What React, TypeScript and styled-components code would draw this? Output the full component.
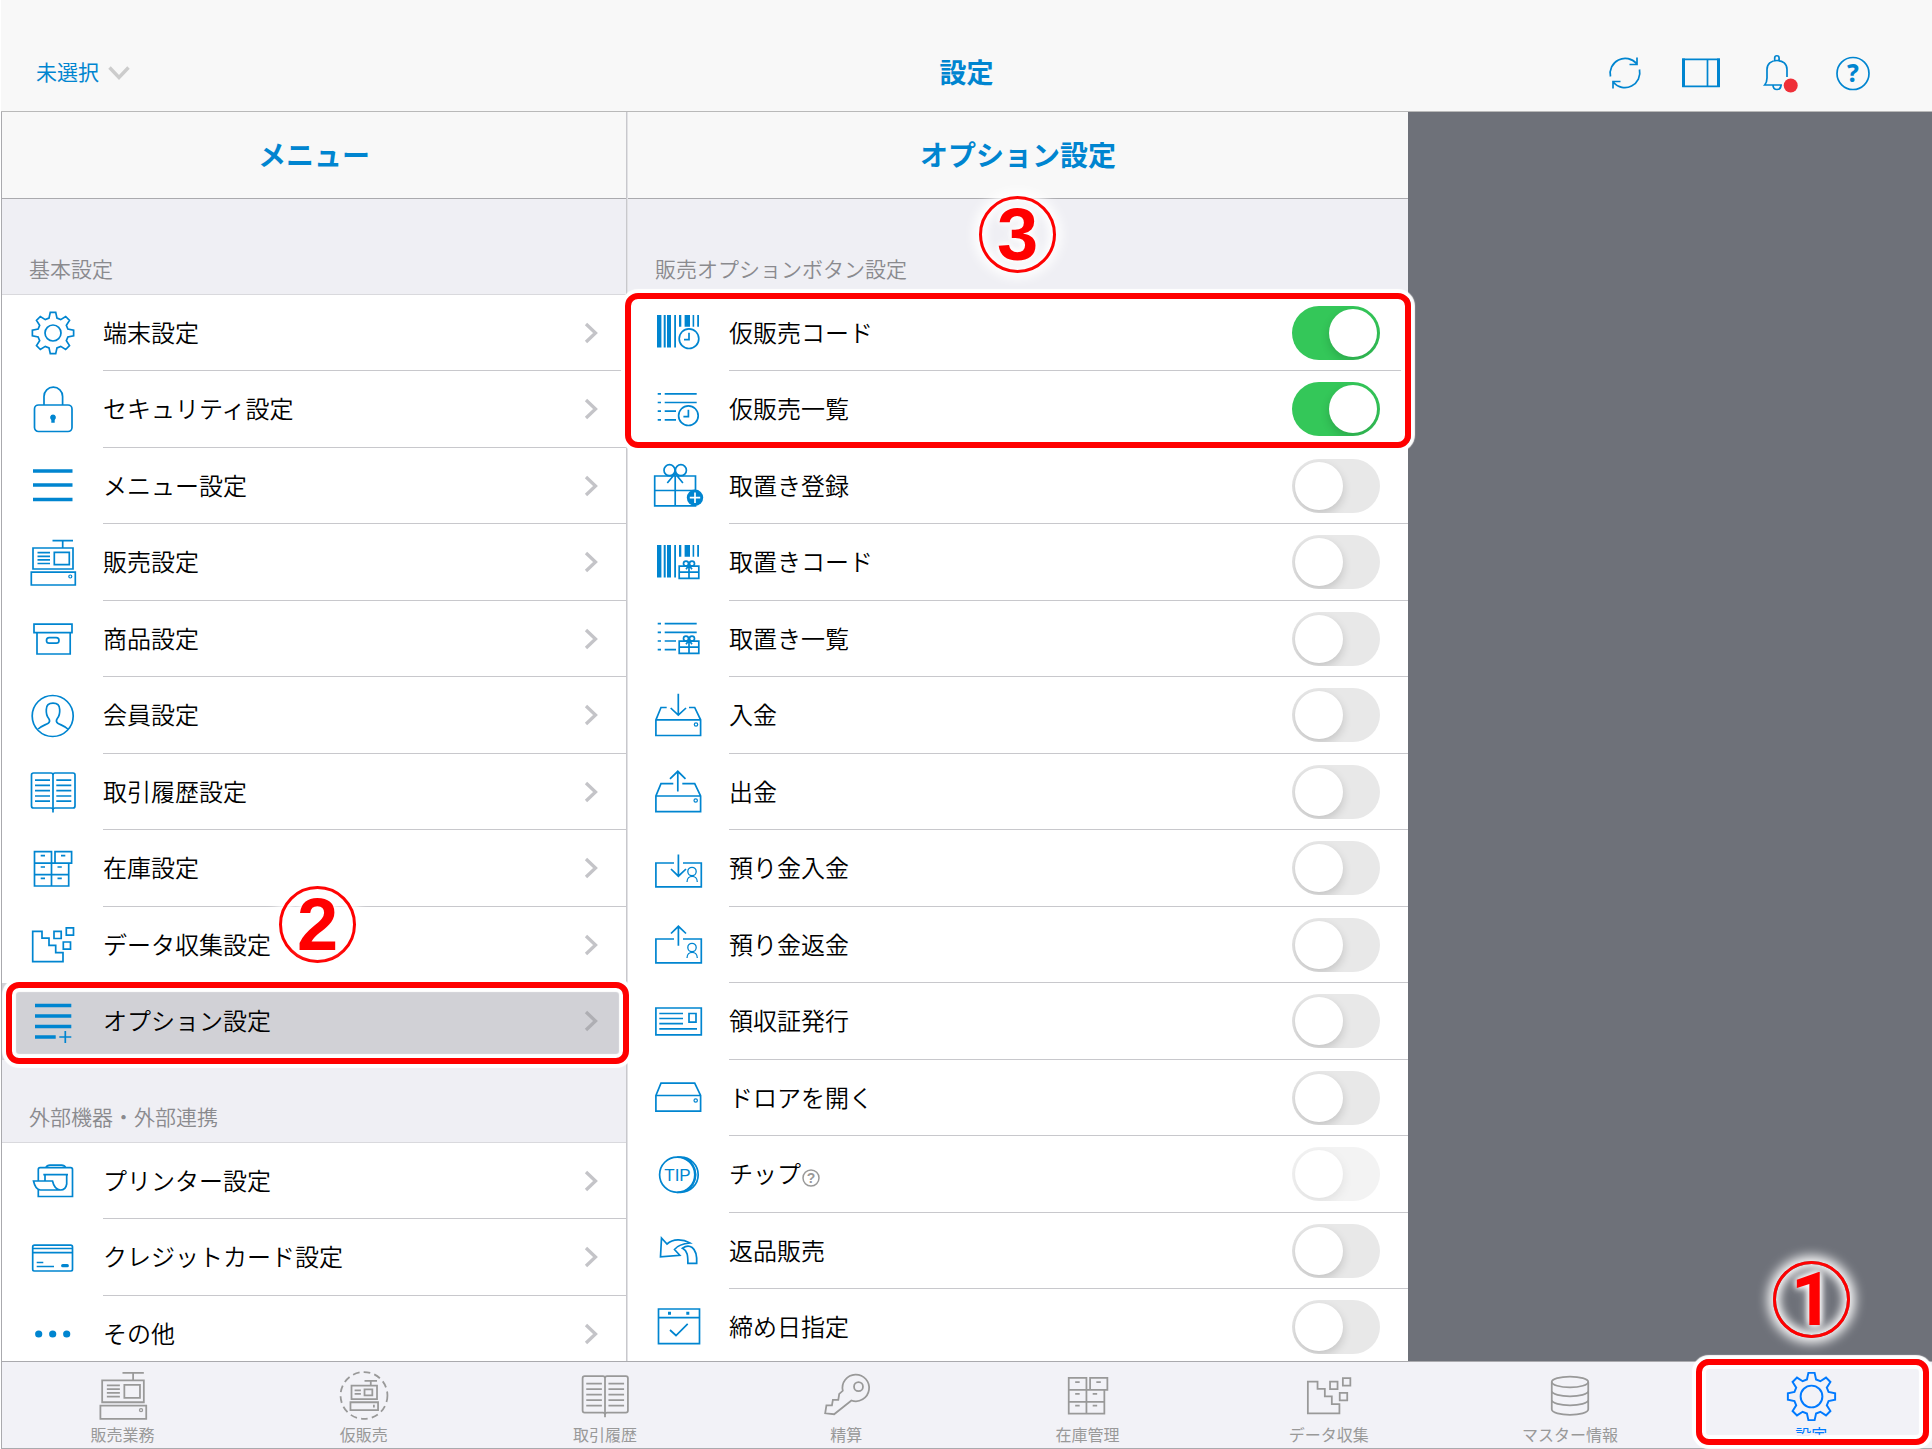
import React, { useState } from "react";
import styled, { createGlobalStyle, css } from "styled-components";

const color = {
  blue: "#0085d0",
  active: "#007aff",
  bar: "#f8f8f8",
  group: "#efeff4",
  tabs: "#f2f2f7",
  selected: "#d1d1d6",
  line: "#c8c8cc",
  strong: "#aaaaae",
  muted: "#8a8a8e",
  tab: "#999999",
  text: "#000000",
  empty: "#6e7179",
  mark: "#ff0000",
};

const GlobalStyle = createGlobalStyle`
  * { box-sizing: border-box; }
  body {
    margin: 0;
    background: #ffffff;
    font-family: "Noto Sans CJK JP", sans-serif;
    color: ${color.text};
  }
  button { font-family: inherit; border: 0; background: none; padding: 0; margin: 0; cursor: pointer; }
  ul { list-style: none; margin: 0; padding: 0; }
  h1, h2, h3 { margin: 0; }
`;

/* ---------- icons ---------- */

const gearPath = (() => {
  const at = (r: number, deg: number) => {
    const a = ((deg - 90) * Math.PI) / 180;
    return `${(24 + r * Math.cos(a)).toFixed(2)} ${(24 + r * Math.sin(a)).toFixed(2)}`;
  };
  const parts: string[] = [];
  for (let i = 0; i < 8; i++) {
    const c = i * 45;
    parts.push(`${at(15.4, c - 15)} L${at(20.8, c - 7.5)} L${at(20.8, c + 7.5)} L${at(15.4, c + 15)}`);
  }
  return `M${parts.join(" L")}Z`;
})();

const Clock = ({ cx, cy }: { cx: number; cy: number }) => (
  <>
    <circle cx={cx} cy={cy} r="9.8" />
    <path d={`M${cx} ${cy - 6}V${cy + 1}H${cx - 5}`} />
  </>
);

const Bars = () => (
  <path
    fill="currentColor"
    stroke="none"
    d="M2 6h4.4v32.4H2zM8.7 6h2v32.4h-2zM12 6h4v32.4h-4zM19.2 6H21v32.4h-1.8zM24 6h2.3v11.7H24zM29.6 6H35v11.7h-5.4zM37.6 6h1.6v11.7h-1.6zM42.2 6h1.8v11.7h-1.8z"
  />
);

const ListLines = ({ y }: { y: number }) => (
  <path
    d={`M2.7 ${y}h3.3M9.7 ${y}h32M2.7 ${y + 8.7}h3.3M9.7 ${y + 8.7}h32M2.7 ${y + 17.4}h3.3M9.7 ${y + 17.4}H21M2.7 ${y + 26}h3.3M9.7 ${y + 26}H21`}
  />
);

const SmallGift = ({ y }: { y: number }) => (
  <>
    <path d={`M24.2 ${y}h19.6v12.2H24.2zM24.2 ${y + 6}h19.6M34 ${y - 2}v14.2M34 ${y - 1}l-3 4M34 ${y - 1}l3 4`} />
    <circle cx="31" cy={y - 2.6} r="2.5" />
    <circle cx="37" cy={y - 2.6} r="2.5" />
  </>
);

const Person = () => (
  <g strokeWidth="1.3">
    <circle cx="37" cy="26.5" r="4.2" />
    <path d="M32 37c0-7.500 10.300-7.500 10.300 0" />
  </g>
);

const shapes: Record<string, React.ReactNode> = {
  gear: (
    <>
      <path d={gearPath} />
      <circle cx="24" cy="24" r="8" />
    </>
  ),
  tabGear: (
    <>
      <path d={gearPath} />
      <circle cx="24" cy="24" r="9.500" />
    </>
  ),
  lock: (
    <>
      <rect x="5.500" y="19" width="37.500" height="26.500" rx="4" />
      <path d="M15 19v-8.500a9.300 9.300 0 0 1 18.600 0V19" />
      <path fill="currentColor" stroke="none" d="M24 28.500a3 3 0 0 1 1.700 5.400V36.700h-3.400v-2.800A3 3 0 0 1 24 28.500z" />
    </>
  ),
  menu: <path strokeWidth="3.3" d="M4 9h39.500M4 23h39.500M4 37.500h39.500" />,
  register: (
    <>
      <path d="M23.500 1.700H44M33.700 1.700v7M4 9h40v21H4zM8.500 13.700H21M8.500 17.300H21M8.500 20.900H21M8.500 24.500H21M25.300 13.300h15v12.400h-15zM2.300 33.200h44V46h-44z" />
      <circle cx="41.300" cy="37.500" r="1.500" strokeWidth="1.200" />
    </>
  ),
  box: (
    <>
      <path d="M5 9.200h38v8.500H5zM8 17.700h33.200V39H8z" />
      <rect x="17.500" y="22.700" width="12.500" height="5.400" rx="2.700" />
    </>
  ),
  member: (
    <>
      <circle cx="23.700" cy="24" r="20.500" />
      <path d="M9.200 37c3-3 7-4 10-5.800 1.700-1.200 1.500-3.200.5-4.700-1.700-2-2.700-4-2.400-9C17.400 13 20 11.200 24 11.200s6.600 1.800 6.700 6.300c.3 5-.7 7-2.400 9-1 1.500-1.200 3.500.5 4.700 3 1.800 7 2.800 10 5.800" />
    </>
  ),
  book: (
    <path d="M24 7q0-2-2-2H4.500q-2 0-2 2v31q0 2 2 2H22q2 0 2 2 0-2 2-2h18q2 0 2-2V7q0-2-2-2H26q-2 0-2 2v37.500M6 12.200h15M6 17.400h15M6 22.700h15M6 28h15M6 33.200h15M27.300 12.200h15M27.300 17.400h15M27.300 22.700h15M27.300 28h15M27.300 33.200h15" />
  ),
  cabinet: (
    <path d="M5.500 6.700h17v11.500h-17zM26 6.700h16.600v11.500H26zM5.500 18.200h34.200V41H5.500zM5.500 29.600h34.200M22.500 18.200V41M11.700 10.700h4.300M32 10.700h4.300M11.700 22h4.300M28.500 22h4.300M11.700 33.300h4.300M28.500 33.300h4.300" />
  ),
  stairs: (
    <path d="M3.700 10.300H13v6.900h7v7.200h6.700v7.300H34v9H3.700zM25 10.300h7.200v7.200H25zM37.300 6.900h7.200v7.200h-7.200zM34.300 21h7.200v7.200h-7.200z" />
  ),
  options: (
    <>
      <path strokeWidth="3.500" d="M6 7.500h36.300M6 18h36.300M6 28.500h36.300M6 39h20.700" />
      <path d="M30.300 39h12M36.300 33v12" />
    </>
  ),
  printer: (
    <path d="M9.300 24V12.500q0-1.800 1.800-1.800h30.600q1.800 0 1.800 1.800v27H9.300V33M16.700 10.700q1.300-2.500 4.300-2.500h11.500q3 0 4.300 2.500M14.300 17.700H39M16 17.700V24M37.700 17.700V27q-1 6-6 6H11.500q-5 0-7-9H23.500q2 9 8.200 9" />
  ),
  card: (
    <>
      <rect x="3.700" y="11.200" width="39.800" height="25.800" rx="1.800" />
      <path d="M3.700 14.500h39.800M3.700 18.600h39.800M7.700 28.500h6.600M7.700 32.500H25" />
      <path strokeWidth="3.200" strokeLinecap="round" d="M33.700 31.700h4.600" />
    </>
  ),
  more: (
    <g fill="currentColor" stroke="none">
      <circle cx="9.700" cy="24" r="3.600" />
      <circle cx="23.700" cy="24" r="3.600" />
      <circle cx="37.700" cy="24" r="3.600" />
    </g>
  ),
  codeClock: (
    <>
      <Bars />
      <Clock cx={34} cy={29.700} />
    </>
  ),
  listClock: (
    <>
      <ListLines y={7.800} />
      <Clock cx={33.400} cy={29.700} />
    </>
  ),
  giftAdd: (
    <>
      <path d="M-.3 14H40.500v29.800H-.3zM-.3 28.500H40.500M20.200 14v29.800M20.200 11.500L12.300 21M20.200 11.500L27.900 21" />
      <circle cx="14.500" cy="8.200" r="5.500" />
      <circle cx="25.900" cy="8.200" r="5.500" />
      <circle cx="40" cy="35.700" r="8.200" fill="currentColor" stroke="none" />
      <path stroke="#ffffff" d="M34.800 35.700h10.400M40 30.500v10.400" />
    </>
  ),
  codeGift: (
    <>
      <Bars />
      <SmallGift y={27.200} />
    </>
  ),
  listGift: (
    <>
      <ListLines y={8.600} />
      <SmallGift y={26.200} />
    </>
  ),
  deposit: (
    <>
      <path d="M23.300 1.800V23M15.700 16l7.600 7.200L31 16M11.700 15.500H6L.9 27.800v15.700h44.700V27.800L39.700 15.500H34M.9 27.800h44.700" />
      <circle cx="41" cy="32.500" r="1.700" strokeWidth="1.200" />
    </>
  ),
  withdraw: (
    <>
      <path d="M22.800 23.500V3.300M15 10.900l7.800-7.600 7.700 7.600M18.300 15.700H6L.9 28v15.700h44.700V28L39.700 15.700H27.300M.9 28h44.700" />
      <circle cx="40.700" cy="32.500" r="1.700" strokeWidth="1.200" />
    </>
  ),
  keepIn: (
    <>
      <path d="M19 18H.9v23.800h45.400V18H28M23.400 9.500V31M16 24l7.400 7.200L31 24" />
      <Person />
    </>
  ),
  keepOut: (
    <>
      <path d="M19 18H.9v23.800h45.400V18H28M23.400 24.700V5.300M16 12.500l7.400-7.200 7.600 7.200" />
      <Person />
    </>
  ),
  receipt: (
    <path d="M.9 10h45.400v26.800H.9zM4.300 15.500H28M4.300 20.500H28M4.300 25.600H28M4.300 30.800H42M34 15.500h7v8.700h-7z" />
  ),
  drawer: (
    <>
      <path d="M.9 21.500L6 9.200h33.700l5.900 12.300v15.700H.9zM.9 21.500h44.700" />
      <circle cx="40.700" cy="26.500" r="1.700" strokeWidth="1.200" />
    </>
  ),
  tip: (
    <>
      <circle cx="22.200" cy="23.700" r="17.600" />
      <path d="M22.200 6.100h3.400a17.600 17.600 0 0 1 0 35.200h-3.400M30 7.500a17.600 17.600 0 0 1 0 32.400" />
      <text x="22.500" y="30" textAnchor="middle" fontFamily="Liberation Sans, sans-serif" fontSize="17" fontWeight="400" fill="currentColor" stroke="none">
        TIP
      </text>
    </>
  ),
  back: (
    <path d="M6.500 11l5.500 6c6-5.300 15.500-5.300 23-1-7 .5-12.500 2.500-15.500 6.500l5.300 5.800-19.300 1.500zM27.500 21.300c6-4.500 15-2.500 14.200 15h-8.800c0-8-.5-12.500-5.400-15z" />
  ),
  calendar: (
    <>
      <path d="M3.500 5h41v34.700h-41zM3.500 13.700h41M15 26l6 5.500 11.700-11.700" />
      <path fill="currentColor" stroke="none" d="M13 7.800h3v3h-3zM31.300 7.800h3v3h-3z" />
    </>
  ),
  provisional: (
    <>
      <circle cx="24" cy="23.500" r="22.500" strokeDasharray="6.500 4" />
      <path d="M24.500 9.500h12M30.500 9.500v4.500M12 14h24.500v13H12zM15 18.700h6M15 22h6M24.500 17.700h7.500v5.600h-7.500zM11 30h26.500v7.500H11zM33.500 32.500v2.500" />
    </>
  ),
  key: (
    <>
      <path d="M20.900 19a12.800 12.800 0 1 1 8.300 9.300L12.600 41.500 4 40.600l1.200-7.600h5.300l.9-5.300h5.200l.9-5.700z" />
      <circle cx="36" cy="15" r="4.300" />
    </>
  ),
  database: (
    <>
      <ellipse cx="24" cy="10.500" rx="17.500" ry="5.200" />
      <path d="M6.500 10.500v26.300c0 7 35 7 35 0V10.500M6.500 19c0 7 35 7 35 0M6.500 27.700c0 7 35 7 35 0" />
    </>
  ),
};

const Svg = styled.svg<{ $size: number }>`
  display: block;
  flex: none;
  width: ${(p) => p.$size}px;
  height: ${(p) => p.$size}px;
  overflow: visible;
  fill: none;
  stroke: currentColor;
`;

const Icon = ({ name, size = 48 }: { name: string; size?: number }) => (
  <Svg $size={size} viewBox="0 0 48 48" strokeWidth="1.700" aria-hidden="true">
    {shapes[name]}
  </Svg>
);

/* ---------- page frame ---------- */

const Page = styled.div`
  display: flex;
  flex-direction: column;
  height: 100vh;
  padding-left: 1px;
  overflow: hidden;
`;

const Header = styled.header`
  display: grid;
  grid-template-columns: 1fr auto 1fr;
  align-items: center;
  flex: none;
  height: 112px;
  padding: 34px 35px 0;
  background: ${color.bar};
  border-bottom: 1px solid #b9b9b9;
  color: ${color.blue};
`;

const titleText = css`
  line-height: 36px;
  padding-bottom: 2px;
  font-weight: 700;
  color: ${color.blue};
`;

const Title = styled.h1`
  ${titleText}
  font-size: 27px;
`;

const Picker = styled.button`
  display: flex;
  align-items: center;
  justify-self: start;
  gap: 9px;
  font-size: 21px;
  line-height: 32px;
  color: ${color.blue};
`;

const PickerText = styled.span`
  padding-bottom: 3px;
`;

const Tools = styled.div`
  display: flex;
  justify-content: flex-end;
  gap: 36px;
  padding-right: 24px;
`;

const Tool = styled.button`
  color: ${color.blue};
`;

const Columns = styled.main`
  position: relative;
  display: grid;
  grid-template-columns: 625fr 781fr 524fr;
  flex: 1;
  min-height: 0;
  overflow: hidden;
  border-left: 1px solid ${color.strong};
`;

const Column = styled.section`
  min-width: 0;
  background: #ffffff;
`;

const MenuColumn = styled(Column)`
  border-right: 1px solid ${color.line};
`;

const OptionColumn = styled(Column)`
  border-left: 1px solid #e2e2e5;
`;

const EmptyColumn = styled.div`
  background: ${color.empty};
`;

const ColumnTitle = styled.h2`
  ${titleText}
  display: flex;
  align-items: center;
  justify-content: center;
  height: 87px;
  background: ${color.bar};
  border-bottom: 1px solid ${color.strong};
  font-size: 28px;
`;

const GroupTitle = styled.h3<{ $first?: boolean }>`
  display: flex;
  align-items: flex-end;
  height: ${(p) => (p.$first ? 96 : 83)}px;
  padding: 0 27px 10px;
  background: ${color.group};
  border-bottom: 1px solid #d9d9dd;
  font-size: 21px;
  line-height: 32px;
  font-weight: 350;
  color: ${color.muted};
`;

/* ---------- rows ---------- */

const Item = styled.li<{ $selected?: boolean }>`
  position: relative;
  height: 76px;
  background: ${(p) => (p.$selected ? color.selected : "transparent")};
  &:nth-child(even) {
    height: 77px;
  }
`;

const rowLayout = css`
  display: flex;
  align-items: center;
  width: 100%;
  height: 100%;
  padding-left: 27px;
  gap: 26px;
  color: ${color.blue};
`;

const MenuButton = styled.button`
  ${rowLayout}
  text-align: left;
`;

const OptionRow = styled.div`
  ${rowLayout}
`;

const RowBody = styled.span<{ $plain?: boolean }>`
  display: flex;
  align-items: center;
  justify-content: space-between;
  flex: 1;
  height: 100%;
  padding-right: 28px;
  border-bottom: 1px solid ${(p) => (p.$plain ? "transparent" : color.line)};
  font-size: 24px;
  line-height: 36px;
  font-weight: 350;
  color: ${color.text};
`;

const LabelGroup = styled.span`
  display: flex;
  align-items: center;
  gap: 1px;
  padding-bottom: 2px;
`;

const HelpButton = styled.button`
  margin-top: 10px;
  color: ${color.tab};
`;

const Switch = styled.input`
  position: relative;
  appearance: none;
  flex: none;
  width: 88px;
  height: 54px;
  margin: 0;
  border-radius: 27px;
  background: #e8e8e8;
  overflow: hidden;
  cursor: pointer;
  &::before {
    content: "";
    position: absolute;
    top: 3px;
    left: 3px;
    width: 48px;
    height: 48px;
    border-radius: 50%;
    background: #ffffff;
    box-shadow: 0 4px 10px rgba(0, 0, 0, 0.16);
  }
  &:checked {
    background: #34c759;
  }
  &:checked::before {
    left: 37px;
  }
  &:disabled {
    opacity: 0.5;
  }
`;

/* ---------- tab bar ---------- */

const TabBar = styled.nav`
  position: relative;
  display: grid;
  grid-template-columns: repeat(8, 1fr);
  flex: none;
  background: ${color.tabs};
  border: 1px solid ${color.strong};
  border-right: 0;
`;

const TabCell = styled.div`
  position: relative;
`;

const Tab = styled.button<{ $active?: boolean }>`
  display: flex;
  flex-direction: column;
  align-items: center;
  width: 100%;
  padding: 8px 0 2px;
  font-size: 16px;
  line-height: 24px;
  color: ${(p) => (p.$active ? color.active : color.tab)};
`;

const TabIcon = styled.span`
  display: flex;
  align-items: center;
  justify-content: center;
  height: 52px;
`;

/* ---------- annotations ---------- */

const Frame = styled.span<{ $inset: string }>`
  position: absolute;
  inset: ${(p) => p.$inset};
  z-index: 2;
  border: 6px solid ${color.mark};
  border-radius: 13px;
  box-shadow: 0 0 1px 4px #ffffff, inset 0 0 1px 4px #ffffff;
  pointer-events: none;
`;

const Step = styled.span<{ $left: string; $top: number; $face?: string }>`
  position: absolute;
  left: ${(p) => p.$left};
  top: ${(p) => p.$top}px;
  z-index: 3;
  width: 77px;
  height: 77px;
  border: 3px solid ${color.mark};
  border-radius: 50%;
  box-shadow: 0 0 12px 5px #ffffff, inset 0 0 10px 4px #ffffff;
  text-shadow: 0 0 6px #ffffff, 0 0 6px #ffffff, 0 0 12px #ffffff;
  font-family: ${(p) => p.$face ?? '"Liberation Sans"'}, sans-serif;
  font-size: 74px;
  line-height: 72px;
  font-weight: 700;
  text-align: center;
  color: ${color.mark};
  pointer-events: none;
`;

/* ---------- data ---------- */

const basic = [
  ["gear", "端末設定"],
  ["lock", "セキュリティ設定"],
  ["menu", "メニュー設定"],
  ["register", "販売設定"],
  ["box", "商品設定"],
  ["member", "会員設定"],
  ["book", "取引履歴設定"],
  ["cabinet", "在庫設定"],
  ["stairs", "データ収集設定"],
  ["options", "オプション設定"],
];

const external = [
  ["printer", "プリンター設定"],
  ["card", "クレジットカード設定"],
  ["more", "その他"],
];

const options = [
  ["codeClock", "仮販売コード"],
  ["listClock", "仮販売一覧"],
  ["giftAdd", "取置き登録"],
  ["codeGift", "取置きコード"],
  ["listGift", "取置き一覧"],
  ["deposit", "入金"],
  ["withdraw", "出金"],
  ["keepIn", "預り金入金"],
  ["keepOut", "預り金返金"],
  ["receipt", "領収証発行"],
  ["drawer", "ドロアを開く"],
  ["tip", "チップ"],
  ["back", "返品販売"],
  ["calendar", "締め日指定"],
];

const tabs = [
  ["register", "販売業務"],
  ["provisional", "仮販売"],
  ["book", "取引履歴"],
  ["key", "精算"],
  ["cabinet", "在庫管理"],
  ["stairs", "データ収集"],
  ["database", "マスター情報"],
  ["tabGear", "設定"],
];

const Chevron = ({ stroke }: { stroke: string }) => (
  <svg width="14" height="22" viewBox="0 0 14 22" fill="none" stroke={stroke} strokeWidth="3.300" aria-hidden="true">
    <path d="M2 2l9.500 9L2 20" />
  </svg>
);

const MenuRow = ({ icon, label, selected, last }: { icon: string; label: string; selected?: boolean; last?: boolean }) => (
  <Item $selected={selected}>
    <MenuButton type="button" aria-current={selected ? "page" : undefined}>
      <Icon name={icon} />
      <RowBody $plain={last}>
        <LabelGroup>{label}</LabelGroup>
        <Chevron stroke={selected ? "#aeaeb3" : "#c4c4c8"} />
      </RowBody>
    </MenuButton>
    {selected && (
      <>
        <Frame $inset="-1px -3px -4px 4px" />
        <Step $left="277px" $top={-97}>2</Step>
      </>
    )}
  </Item>
);

export default function App() {
  const [on, setOn] = useState<Record<string, boolean>>({ codeClock: true, listClock: true });

  return (
    <>
      <GlobalStyle />
      <Page>
        <Header>
          <Picker type="button">
            <PickerText>未選択</PickerText>
            <svg width="22" height="14" viewBox="0 0 22 14" fill="none" stroke="#cccccc" strokeWidth="3.400" aria-hidden="true">
              <path d="M1.500 1.500L11 11.500l9.500-10" />
            </svg>
          </Picker>
          <Title>設定</Title>
          <Tools>
            <Tool type="button" aria-label="更新">
              <Svg $size={40} viewBox="0 0 40 40" strokeWidth="1.700">
                <path d="M5.500 23.500A15 15 0 0 1 31.500 10.500M34.500 16.500A15 15 0 0 1 8.500 29.500M32 4.500v7h-7.500M8 35.500v-7h7.500" />
              </Svg>
            </Tool>
            <Tool type="button" aria-label="画面分割">
              <Svg $size={40} viewBox="0 0 40 40" strokeWidth="1.700">
                <path d="M2 6.300h36v27H2zM26.500 6.300v27" />
                <path strokeWidth="3" d="M2.500 5.500v28.600M37.500 5.500v28.600" />
              </Svg>
            </Tool>
            <Tool type="button" aria-label="通知">
              <Svg $size={40} viewBox="0 0 40 40" strokeWidth="1.700">
                <path d="M30 24V16.500C30 11 26 7.500 20 7.500S10 11 10 16.500V25c0 3-.7 5-2.300 7H25M17.700 7.500V5c0-3 4.400-3 4.400 0v2.500M16 32c0 6 8 6 8 0" />
                <circle cx="33.700" cy="32.500" r="7" fill="#ef2f38" stroke="none" />
              </Svg>
            </Tool>
            <Tool type="button" aria-label="ヘルプ">
              <Svg $size={40} viewBox="0 0 40 40" strokeWidth="1.700">
                <circle cx="20" cy="20.500" r="16" />
                <text x="20" y="29" textAnchor="middle" fontFamily="Noto Sans, sans-serif" fontWeight="800" fontSize="24" fill="currentColor" stroke="none">
                  ?
                </text>
              </Svg>
            </Tool>
          </Tools>
        </Header>

        <Columns>
          <MenuColumn>
            <ColumnTitle>メニュー</ColumnTitle>
            <GroupTitle $first>基本設定</GroupTitle>
            <ul>
              {basic.map(([icon, label]) => (
                <MenuRow key={icon} icon={icon} label={label} selected={icon === "options"} last={icon === "options"} />
              ))}
            </ul>
            <GroupTitle>外部機器・外部連携</GroupTitle>
            <ul>
              {external.map(([icon, label]) => (
                <MenuRow key={icon} icon={icon} label={label} last={icon === "more"} />
              ))}
            </ul>
          </MenuColumn>

          <OptionColumn>
            <ColumnTitle>オプション設定</ColumnTitle>
            <GroupTitle $first>販売オプションボタン設定</GroupTitle>
            <ul>
              {options.map(([icon, label], i) => (
                <Item key={icon}>
                  <OptionRow>
                    <Icon name={icon} />
                    <RowBody>
                      <LabelGroup>
                        <label htmlFor={`option-${icon}`}>{label}</label>
                        {icon === "tip" && (
                          <HelpButton type="button" aria-label="チップの説明">
                            <Svg $size={18} viewBox="0 0 18 18" strokeWidth="1.500">
                              <circle cx="9" cy="9" r="8" />
                              <text x="9" y="14" textAnchor="middle" fontFamily="Liberation Sans, sans-serif" fontWeight="700" fontSize="14" fill="currentColor" stroke="none">
                                ?
                              </text>
                            </Svg>
                          </HelpButton>
                        )}
                      </LabelGroup>
                      <Switch
                        id={`option-${icon}`}
                        type="checkbox"
                        role="switch"
                        disabled={icon === "tip"}
                        checked={!!on[icon]}
                        onChange={(e) => setOn({ ...on, [icon]: e.target.checked })}
                      />
                    </RowBody>
                  </OptionRow>
                  {i === 0 && (
                    <>
                      <Frame $inset="-2px -3px -77px -3px" />
                      <Step $left="calc(50% - 39px)" $top={-99}>3</Step>
                    </>
                  )}
                </Item>
              ))}
            </ul>
          </OptionColumn>
          <EmptyColumn />
        </Columns>

        <TabBar>
          {tabs.map(([icon, label]) => {
            const active = icon === "tabGear";
            return (
              <TabCell key={icon}>
                <Tab type="button" $active={active}>
                  <TabIcon>
                    <Icon name={icon} size={active ? 55 : 50} />
                  </TabIcon>
                  {label}
                </Tab>
                {active && (
                  <>
                    <Frame $inset="-3px 3px 3px 5px" />
                    <Step $left="calc(50% - 38px)" $top={-101} $face="Roboto">1</Step>
                  </>
                )}
              </TabCell>
            );
          })}
        </TabBar>
      </Page>
    </>
  );
}
